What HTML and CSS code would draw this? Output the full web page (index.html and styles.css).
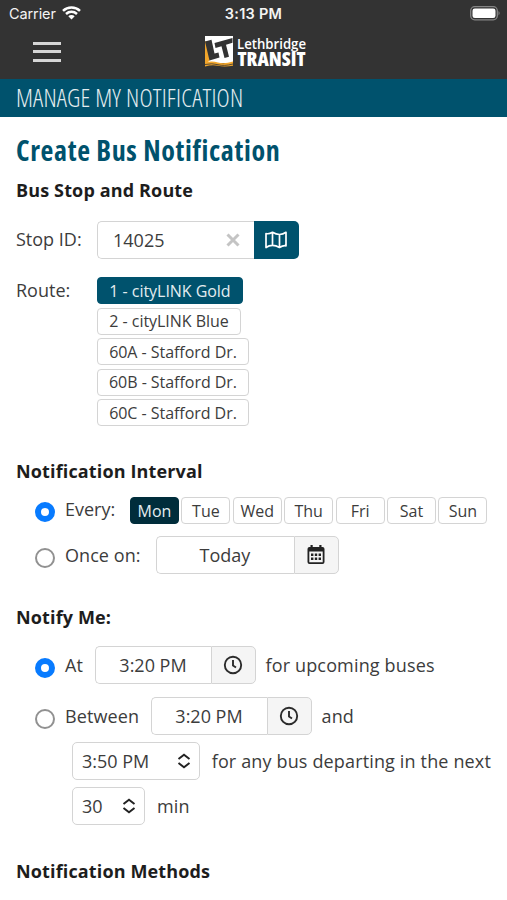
FILE: index.html
```html
<!DOCTYPE html>
<html lang="en">
<head>
<meta charset="utf-8">
<title>Lethbridge Transit</title>
<link rel="stylesheet" href="styles.css">
</head>
<body>
<header class="top">
  <div class="status">
    <div class="carrier"><span>Carrier</span>
      <svg width="19" height="14" viewBox="0 0 19 14" fill="none" stroke="#fff" stroke-width="2.5"><path d="M1 4.9C5.7.4 13.3.4 18 4.9M4 8c3.2-2.9 7.800-2.900 11 0"/><path d="M6.300 10.300a4.500 4.500 0 0 1 6.400 0L9.500 13.600z" fill="#fff" stroke="none"/></svg>
    </div>
    <div class="clock">3:13 PM</div>
    <svg class="battery" width="31" height="15" viewBox="0 0 31 15"><rect x=".7" y=".7" width="26.600" height="13.100" rx="4" fill="none" stroke="#858585" stroke-width="1.300"/><rect x="2.500" y="2.500" width="23" height="9.500" rx="2.300" fill="#fff"/><path d="M28.500 5q2.300 2.200 0 4.500z" fill="#858585"/></svg>
  </div>
  <div class="nav">
    <div class="menu"><i></i><i></i><i></i></div>
    <svg class="logo" width="104" height="36" viewBox="0 0 104 36">
      <path d="M1 1h28v27H1z" fill="#fff"/>
      <path d="M1 6l2 1 3 18-5 5z" fill="#f2a62b"/>
      <path d="M1 6.500l6.500-1.700L10.500 18.500l4-1 1 5L5.500 25.500z" fill="#333"/>
      <path d="M10.500 8L28.500 3v4.800L22 9.800l3 12-4.500 1.200-3-11.800L11.500 13z" fill="#333"/>
      <path d="M1 27.500q7-2 13 0t15-1v4.300q-9 1.500-15 0t-13 .7z" fill="#f2a62b"/>
      <path d="M1 29.500q7-1.500 13 .2t15-.7" fill="none" stroke="#333" stroke-width=".8"/>
      <text class="logo-a" x="33" y="13.500" textLength="69" lengthAdjust="spacingAndGlyphs">Lethbridge</text>
      <text class="logo-b" x="33.500" y="31" textLength="68" lengthAdjust="spacingAndGlyphs">TRANSIT</text>
    </svg>
  </div>
</header>
<div class="bar"><span>MANAGE MY NOTIFICATION</span></div>
<main>
  <h1><span>Create Bus Notification</span></h1>
  <h2 class="h-stop">Bus Stop and Route</h2>
  <div class="row stop">
    <label class="lead">Stop ID:</label>
    <div class="field search"><span>14025</span>
      <svg width="14" height="14" viewBox="0 0 14 14" stroke="#c4c4c4" stroke-width="3"><path d="M1.500 1.500l11 11m0-11l-11 11"/></svg>
    </div>
    <div class="mapbtn"><svg width="22" height="18" viewBox="0 0 22 18" fill="none" stroke="#fff" stroke-width="1.700" stroke-linejoin="round"><path d="M1 2.500Q4 3.300 7.500 1.300q3.500 2.200 7 2.200 3.500 0 6.500-2.200v13.500q-3-.5-6.500 1.700-3.500-2.200-7-2.200-3.500 0-6.500 2.200zM7.500 1.300v13M14.500 3.500v13"/></svg></div>
  </div>
  <div class="routes">
    <label class="lead">Route:</label>
    <div class="list">
      <span class="chip on w1">1 - cityLINK Gold</span>
      <span class="chip w2">2 - cityLINK Blue</span>
      <span class="chip w3">60A - Stafford Dr.</span>
      <span class="chip w3">60B - Stafford Dr.</span>
      <span class="chip w3">60C - Stafford Dr.</span>
    </div>
  </div>
  <h2 class="h-int">Notification Interval</h2>
  <div class="row every">
    <i class="radio sel"></i><label class="every-l">Every:</label>
    <div class="days"><span class="chip dark">Mon</span><span class="chip">Tue</span><span class="chip">Wed</span><span class="chip">Thu</span><span class="chip">Fri</span><span class="chip">Sat</span><span class="chip">Sun</span></div>
  </div>
  <div class="row once">
    <i class="radio"></i><label class="once-l">Once on:</label>
    <div class="field date"><span>Today</span></div>
    <div class="addon"><svg width="18" height="20" viewBox="0 0 18 20"><path fill="#222" fill-rule="evenodd" d="M3.500 0h2.200v2h6.600V0h2.200v2H15.500q2 0 2 2v13q0 2-2 2h-13q-2 0-2-2V4q0-2 2-2h1zM2.300 6.600v10.600h13.400V6.600z"/><path fill="#222" d="M4 8.500h2.400v2.400H4zm3.800 0h2.400v2.400H7.800zm3.800 0H14v2.400h-2.400zM4 12.600h2.400V15H4zm3.800 0h2.400V15H7.800zm3.800 0H14V15h-2.400z"/></svg></div>
  </div>
  <h2 class="h-me">Notify Me:</h2>
  <div class="row at">
    <i class="radio sel"></i><label class="at-l">At</label>
    <div class="field time"><span>3:20 PM</span></div>
    <div class="addon"><svg width="20" height="20" viewBox="0 0 20 20" fill="none" stroke="#2b2b2b" stroke-width="1.900"><circle cx="10" cy="10" r="8.200"/><path d="M10 5v5.500l3 2"/></svg></div>
    <label class="after">for upcoming buses</label>
  </div>
  <div class="row between">
    <i class="radio"></i><label class="bet-l">Between</label>
    <div class="field time"><span>3:20 PM</span></div>
    <div class="addon"><svg width="20" height="20" viewBox="0 0 20 20" fill="none" stroke="#2b2b2b" stroke-width="1.900"><circle cx="10" cy="10" r="8.200"/><path d="M10 5v5.500l3 2"/></svg></div>
    <label class="after">and</label>
  </div>
  <div class="row until">
    <div class="select s1"><span>3:50 PM</span><svg width="14" height="16" viewBox="0 0 14 16" fill="none" stroke="#222" stroke-width="2"><path d="M1.500 6L7 1.800 12.500 6M1.500 10L7 14.200 12.500 10"/></svg></div>
    <label class="after s">for any bus departing in the next</label>
  </div>
  <div class="row mins">
    <div class="select s2"><span>30</span><svg width="14" height="16" viewBox="0 0 14 16" fill="none" stroke="#222" stroke-width="2"><path d="M1.500 6L7 1.800 12.500 6M1.500 10L7 14.200 12.500 10"/></svg></div>
    <label class="after s">min</label>
  </div>
  <h2 class="h-meth">Notification Methods</h2>
</main>
</body>
</html>
```
FILE: styles.css
```css
* { box-sizing: border-box; }
body { margin: 0; width: 507px; height: 900px; overflow: hidden; background: #fff; color: #3c3c3c; font: 18px/24px "Open Sans", sans-serif; white-space: nowrap; }
svg { display: block; flex: none; }
.top { height: 79px; background: #333; }
.status { height: 27px; display: grid; grid-template-columns: 1fr auto 1fr; align-items: center; padding: 0 6px 0 9px; color: #f4f4f4; font: 14.5px/27px Inter, sans-serif; }
.carrier { display: flex; align-items: center; gap: 6px; }
.carrier span { width: 47px; letter-spacing: -.1px; }
.carrier svg { margin-top: -2px; }
.clock { font-weight: 600; font-size: 14.5px; letter-spacing: .25px; margin-right: 3px; }
.battery { justify-self: end; }
.nav { height: 52px; display: flex; align-items: flex-start; padding: 8px 0 0 33px; }
.menu { width: 28px; margin-right: 143px; padding-top: 7px; display: grid; gap: 5.300px; }
.menu i { height: 3px; background: #d6d6d6; }
.logo { overflow: visible; }
.logo-a { font: 600 14px "Open Sans", sans-serif; fill: #fff; }
.logo-b { font: 800 19.5px "Open Sans", sans-serif; font-stretch: 75%; fill: #fff; }
.bar { height: 38px; padding-left: 16px; background: #00526d; color: #e4edf0; font-size: 25px; line-height: 37px; font-weight: 300; font-stretch: 75%; letter-spacing: .18px; }
main { padding: 0 16px; }
h1, h2 { margin: 0; }
h1 { margin-top: 13px; height: 41px; color: #00526d; font-size: 28px; line-height: 40px; font-stretch: 75%; letter-spacing: .65px; }
h2 { height: 24px; font-size: 18px; line-height: 24px; font-weight: 700; color: #1d1d1d; letter-spacing: .14px; }
.h-stop { margin-top: 7px; }
.row { display: flex; align-items: center; height: 38px; }
.stop { margin-top: 19px; }
.lead { width: 81px; flex: none; }
.stop .lead { margin-top: -3px; }
.field { height: 38px; border: 1.500px solid #d4d4d4; border-right: 0; border-radius: 5px 0 0 5px; display: flex; align-items: center; justify-content: center; }
.date span, .time span { margin-left: -1px; }
.search { width: 157px; padding: 0 14px 0 15px; justify-content: space-between; }
.search svg { margin-top: -1px; }
.mapbtn { width: 45px; height: 38px; border-radius: 0 5px 5px 0; background: #00526d; display: grid; place-items: center; }
.mapbtn svg { margin-left: -1px; }
.routes { display: flex; margin-top: 18px; }
.routes .lead { padding-top: 1px; }
.list { display: grid; justify-items: start; gap: 3.600px; }
.chip { height: 27px; display: flex; align-items: center; justify-content: center; border: 1px solid #d4d4d4; border-radius: 4px; font-size: 16px; background: #fff; }
.on { background: #00526d; border-color: #00526d; color: #e4edf0; }
.dark { background: #002d3b; border-color: #002d3b; color: #e4edf0; }
.list .chip { letter-spacing: -.04px; }
.w1 { width: 146px; }
.w2 { width: 144px; }
.w3 { width: 152px; }
.h-int { margin-top: 33px; }
.every { height: 27px; margin-top: 14px; padding-left: 19px; }
.radio { width: 20px; height: 20px; flex: none; border: 2px solid #919191; border-radius: 50%; margin: 5px 10px 0 0; }
.radio.sel { border: 6px solid #087bff; }
.every .radio { margin-top: 2px; }
.row label { flex: none; }
.every-l { width: 65px; margin-top: -3px; }
.days { display: flex; gap: 2.400px; }
.days .chip { width: 49px; }
.once { margin-top: 12px; padding-left: 19px; }
.once-l { width: 91px; margin-top: -1px; letter-spacing: .07px; }
.date { width: 138px; }
.addon { width: 45px; height: 38px; border: 1.500px solid #d4d4d4; border-radius: 0 5px 5px 0; background: #f5f5f5; display: grid; place-items: center; }
.addon svg { margin: -1px 0 0 -1px; }
.h-me { margin-top: 31px; }
.at { margin-top: 17px; padding-left: 19px; }
.at-l { width: 30px; margin-top: -1px; }
.time { width: 116px; }
.after { margin-left: 9.5px; margin-top: -1px; letter-spacing: .15px; }
.between { margin-top: 13px; padding-left: 19px; }
.bet-l { width: 86px; margin-top: -1px; letter-spacing: .1px; }
.until { margin-top: 7px; padding-left: 56px; }
.mins { margin-top: 7px; padding-left: 56px; }
.select { height: 38px; border: 1.500px solid #d4d4d4; border-radius: 5px; display: flex; align-items: center; justify-content: space-between; padding: 0 8px 0 9px; }
.select svg { margin-top: -1px; }
.s1 { width: 128px; }
.s2 { width: 73px; }
.after.s { margin-left: 12px; }
.h-meth { margin-top: 34px; }
```
